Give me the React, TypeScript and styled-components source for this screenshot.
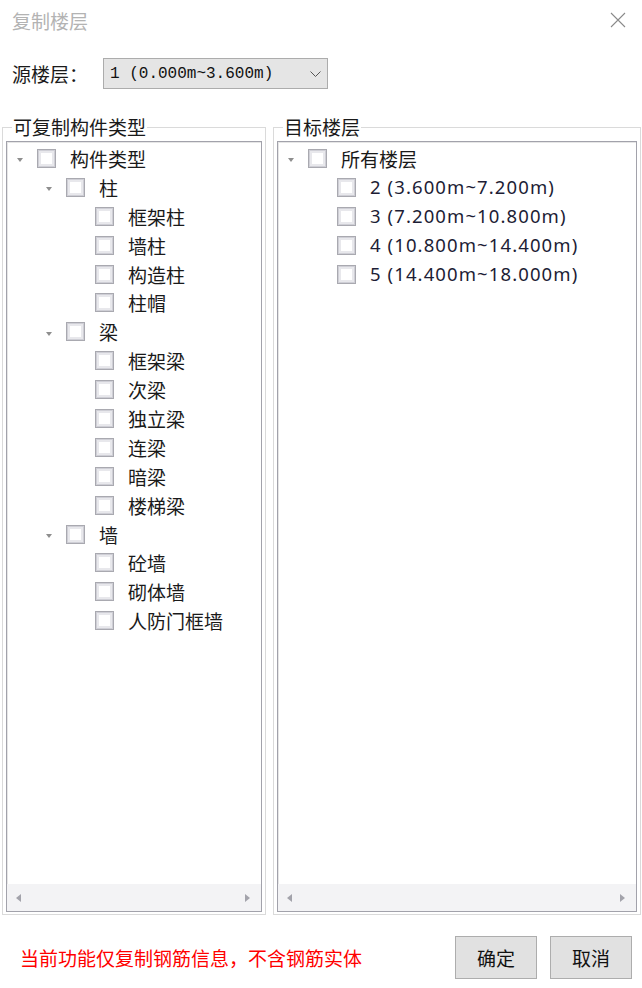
import React from 'react'
import styled, { createGlobalStyle } from 'styled-components'

type Node = { label: string; level: number; expandable?: boolean; floor?: boolean }

const componentTree: Node[] = [
  { label: '构件类型', level: 0, expandable: true },
  { label: '柱', level: 1, expandable: true },
  { label: '框架柱', level: 2 },
  { label: '墙柱', level: 2 },
  { label: '构造柱', level: 2 },
  { label: '柱帽', level: 2 },
  { label: '梁', level: 1, expandable: true },
  { label: '框架梁', level: 2 },
  { label: '次梁', level: 2 },
  { label: '独立梁', level: 2 },
  { label: '连梁', level: 2 },
  { label: '暗梁', level: 2 },
  { label: '楼梯梁', level: 2 },
  { label: '墙', level: 1, expandable: true },
  { label: '砼墙', level: 2 },
  { label: '砌体墙', level: 2 },
  { label: '人防门框墙', level: 2 },
]

const floorTree: Node[] = [
  { label: '所有楼层', level: 0, expandable: true },
  { label: '2 (3.600m~7.200m)', level: 1, floor: true },
  { label: '3 (7.200m~10.800m)', level: 1, floor: true },
  { label: '4 (10.800m~14.400m)', level: 1, floor: true },
  { label: '5 (14.400m~18.000m)', level: 1, floor: true },
]

const GlobalStyle = createGlobalStyle`
  html, body {
    margin: 0;
    padding: 0;
    background: #fff;
  }
  body {
    font-family: 'Noto Sans CJK SC', 'Noto Sans', sans-serif;
    color: #1a1a1a;
  }
  * {
    box-sizing: border-box;
  }
`

const Dialog = styled.div`
  width: 642px;
  height: 988px;
  display: flex;
  flex-direction: column;
  background: #fff;
  overflow: hidden;
`

const TitleBar = styled.div`
  height: 40px;
  display: flex;
  align-items: center;
  justify-content: space-between;
  padding: 0 16px 0 12px;
`

const Title = styled.div`
  font-size: 19px;
  line-height: 1;
  color: #b3b3b3;
`

const CloseButton = styled.button`
  width: 16px;
  height: 16px;
  padding: 0;
  border: 0;
  background: none;
  display: flex;
`

const SourceRow = styled.div`
  margin-top: 18px;
  height: 31px;
  display: flex;
  align-items: center;
  padding-left: 12px;
`

const SourceLabel = styled.div`
  width: 91px;
  font-size: 19px;
  line-height: 1;
  white-space: nowrap;
`

const Select = styled.div`
  width: 225px;
  height: 31px;
  display: flex;
  align-items: center;
  justify-content: space-between;
  padding: 0 6px 0 6px;
  background: #e5e5e5;
  border: 1px solid #acacac;
  font-family: 'Liberation Mono', monospace;
  font-size: 16px;
  color: #111;
`

const Groups = styled.div`
  margin-top: 27px;
  height: 799px;
  display: grid;
  grid-template-columns: 264px 368px;
  column-gap: 7px;
  padding-left: 2px;
`

const Group = styled.fieldset`
  margin: 0;
  padding: 3px 3px 2px;
  min-width: 0;
  min-height: 0;
  border: 1px solid #dadada;
  display: flex;
  flex-direction: column;
`

const Legend = styled.legend`
  margin-left: 6px;
  padding: 0 1px;
  font-size: 19px;
  line-height: 22px;
  color: #1a1a1a;
`

const TreeBox = styled.div`
  flex: 1;
  min-height: 0;
  display: flex;
  flex-direction: column;
  background: #fff;
  border: 1px solid #a2a2ab;
  box-shadow: inset 1px 1px 0 #e6e6e6;
`

const TreeList = styled.div`
  flex: 1;
  padding-top: 2px;
  overflow: hidden;
`

const Row = styled.div<{ $level: number }>`
  height: 28.9px;
  display: flex;
  align-items: center;
  padding-left: ${(p) => 10 + p.$level * 29}px;
`

const Expander = styled.div`
  width: 20px;
  height: 100%;
  display: flex;
  align-items: center;
  flex-shrink: 0;
`

const Triangle = styled.span`
  margin-top: 4px;
  width: 0;
  height: 0;
  border-left: 3.5px solid transparent;
  border-right: 3.5px solid transparent;
  border-top: 4px solid #8e8e8e;
`

const Checkbox = styled.span`
  width: 19px;
  height: 19px;
  flex-shrink: 0;
  background: #fff;
  border: 1px solid #a9a9b0;
  box-shadow: inset 0 0 0 1px #cfcfd6, inset 0 0 0 3px #e8e8ec;
`

const Label = styled.span<{ $floor?: boolean }>`
  margin-left: 14px;
  white-space: nowrap;
  line-height: 1;
  color: ${(p) => (p.$floor ? '#1d1d35' : '#1a1a1a')};
  font-family: ${(p) =>
    p.$floor ? "'Noto Sans', 'Noto Sans CJK SC', sans-serif" : "'Noto Sans CJK SC', sans-serif"};
  font-size: ${(p) => (p.$floor ? '18.5px' : '19px')};
  letter-spacing: ${(p) => (p.$floor ? '1.1px' : '0')};
`

const HScrollbar = styled.div`
  height: 27px;
  flex-shrink: 0;
  display: flex;
  align-items: center;
  justify-content: space-between;
  padding: 1px 11px 0 9px;
  background: #f3f3f5;
`

const Arrow = styled.span<{ $dir: 'left' | 'right' }>`
  width: 0;
  height: 0;
  border-top: 4.5px solid transparent;
  border-bottom: 4.5px solid transparent;
  ${(p) =>
    p.$dir === 'left' ? 'border-right: 5px solid #a3a3ab;' : 'border-left: 5px solid #a3a3ab;'}
`

const Footer = styled.div`
  padding: 21px 10px 0 20px;
  height: 43px;
  box-sizing: content-box;
  display: flex;
  align-items: center;
  gap: 13px;
`

const Notice = styled.div`
  flex: 1;
  font-size: 19px;
  line-height: 1;
  color: #ff0000;
  white-space: nowrap;
`

const Button = styled.button`
  width: 82px;
  height: 43px;
  padding: 0;
  background: #e1e1e1;
  border: 1px solid #adadad;
  font-family: 'Noto Sans CJK SC', sans-serif;
  font-size: 19px;
  color: #111;
`

const Tree = ({ nodes }: { nodes: Node[] }) => (
  <TreeBox>
    <TreeList>
      {nodes.map((n, i) => (
        <Row key={i} $level={n.level}>
          <Expander>{n.expandable && <Triangle />}</Expander>
          <Checkbox />
          <Label $floor={n.floor}>{n.label}</Label>
        </Row>
      ))}
    </TreeList>
    <HScrollbar>
      <Arrow $dir="left" />
      <Arrow $dir="right" />
    </HScrollbar>
  </TreeBox>
)

export default function App() {
  return (
    <Dialog>
      <GlobalStyle />
      <TitleBar>
        <Title>复制楼层</Title>
        <CloseButton aria-label="关闭">
          <svg width="16" height="16" viewBox="0 0 16 16">
            <path d="M1 1 L15 15 M15 1 L1 15" stroke="#8a8a8a" strokeWidth="1.1" fill="none" />
          </svg>
        </CloseButton>
      </TitleBar>

      <SourceRow>
        <SourceLabel>源楼层：</SourceLabel>
        <Select>
          <span>1 (0.000m~3.600m)</span>
          <svg width="11" height="6" viewBox="0 0 11 6">
            <path d="M0.5 0.5 L5.5 5.5 L10.5 0.5" stroke="#555" strokeWidth="1" fill="none" />
          </svg>
        </Select>
      </SourceRow>

      <Groups>
        <Group>
          <Legend>可复制构件类型</Legend>
          <Tree nodes={componentTree} />
        </Group>
        <Group>
          <Legend>目标楼层</Legend>
          <Tree nodes={floorTree} />
        </Group>
      </Groups>

      <Footer>
        <Notice>当前功能仅复制钢筋信息，不含钢筋实体</Notice>
        <Button>确定</Button>
        <Button>取消</Button>
      </Footer>
    </Dialog>
  )
}
